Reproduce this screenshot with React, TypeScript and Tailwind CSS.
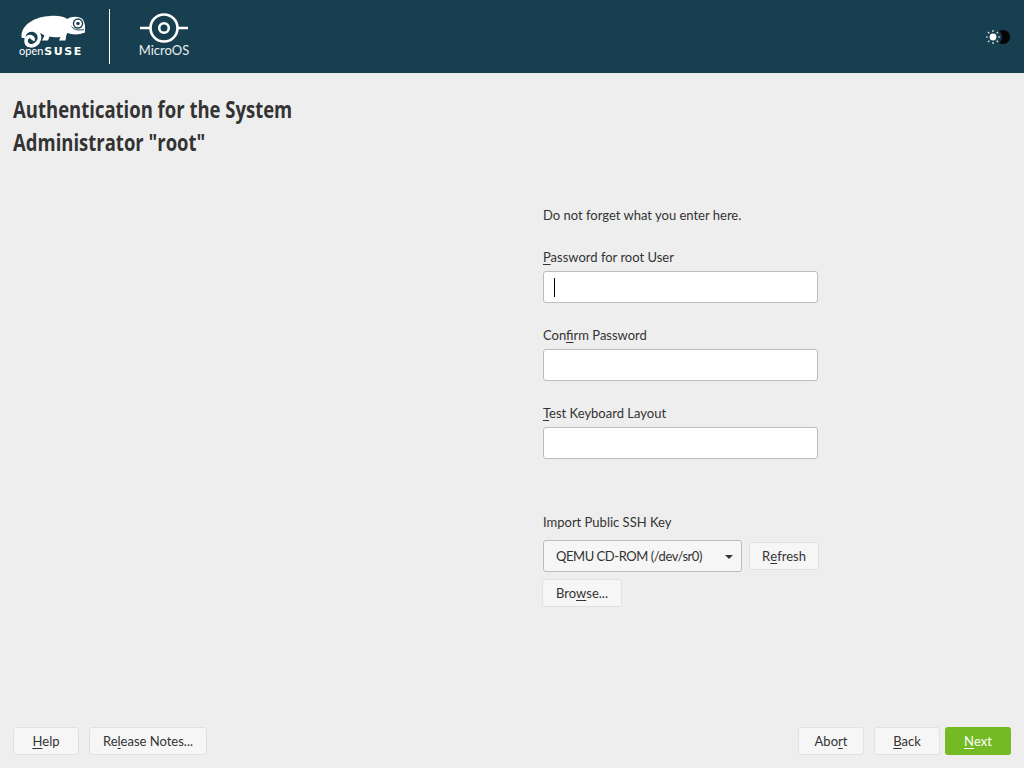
const sans = "font-['Lato','Noto_Sans',sans-serif]";

function Key({ children }: { children: string }) {
  return <span className="underline underline-offset-2">{children}</span>;
}

function Chameleon() {
  return (
    <svg width="70" height="36" viewBox="15 12 70 36" className="block">
      <path
        fill="#fff"
        d="M21.5 37C21 24 36 16.5 50 16C57 15.5 63 16 67.5 19C71 16 79 16 82.5 19C85 22 85.5 28 85 32.5C79 35 72 35 67.5 33C66 35 66 37 65.5 40.5L59 40.5L60.5 37C56 37.5 52 37 49.5 36.5L48 40.5L42 40.5L44.5 35.5C41 33.5 38.5 31.5 36 30.5C31 29 25 31 21.5 37Z"
      />
      <path
        fill="none"
        stroke="#fff"
        strokeWidth="3.6"
        d="M23.4 38C23.6 32 29 29.5 33 30C38 31 40.2 35 39.2 39.5C38 44 33.5 46.6 29.5 45.6C25.5 44.5 25 39 28 37C31 35.5 34 38 32.8 40.5"
      />
      <circle cx="78" cy="23.5" r="5.2" fill="#183f50" />
      <circle cx="78" cy="23.5" r="3.8" fill="#fff" />
      <circle cx="78" cy="23.5" r="1.7" fill="#183f50" />
      <path fill="none" stroke="#183f50" strokeWidth="1" d="M71.5 26.5C75 30.5 79 30.5 84 29.5" />
    </svg>
  );
}

function MicroOsIcon() {
  return (
    <svg width="50" height="32" viewBox="0 0 50 32" className="block">
      <circle cx="25" cy="16" r="13.5" fill="none" stroke="#fff" strokeWidth="2.6" />
      <circle cx="25" cy="16" r="4.8" fill="none" stroke="#fff" strokeWidth="2.6" />
      <path d="M1 16H11M39 16H49" stroke="#fff" strokeWidth="2.6" />
    </svg>
  );
}

function ThemeToggle() {
  return (
    <svg width="26" height="18" viewBox="0 0 26 18" className="block">
      <path fill="#050505" d="M14 3.3A7 7 0 1 1 14 14.7A7 7 0 0 0 14 3.3Z" />
      <circle cx="8" cy="9" r="3.4" fill="#fff" />
      <path
        stroke="#dfe8ec"
        strokeWidth="1.2"
        d="M8 2V4M8 14V16M1 9H3M13 9H15M3 4L4.4 5.4M11.6 12.6L13 14M3 14L4.4 12.6M11.6 5.4L13 4"
      />
    </svg>
  );
}

function Button({ children, className = "" }: { children: React.ReactNode; className?: string }) {
  return (
    <button
      type="button"
      className={`flex h-[28px] items-center justify-center rounded-[3px] border border-[#e1e1e1] bg-[#f6f6f6] pt-px text-[13px] text-[#333] ${className}`}
    >
      {children}
    </button>
  );
}

function Field({ label, caret = false }: { label: React.ReactNode; caret?: boolean }) {
  return (
    <div className="flex flex-col">
      <label className="h-[20px] text-[13px] leading-[20px] text-[#333]">{label}</label>
      <div className="mt-[4px] flex h-[32px] w-[275px] items-center rounded-[3px] border border-[#bcbcbc] bg-white pl-[10px]">
        {caret && <span className="h-[19px] w-px bg-black" />}
      </div>
    </div>
  );
}

export default function App() {
  return (
    <div className={`flex h-[768px] w-[1024px] flex-col overflow-hidden bg-[#eeeeee] ${sans}`}>
      <header className="flex h-[73px] shrink-0 items-center bg-[#183f50] pl-[15px] pr-[13px]">
        <div className="mb-[4px] flex w-[73px] flex-col items-start">
          <Chameleon />
          <div className="-mt-[2px] ml-[4px] whitespace-nowrap text-[11px] leading-[10px] text-white">
            open<span className="ml-px font-['DejaVu_Sans'] text-[11px] font-bold tracking-[1.5px]">SUSE</span>
          </div>
        </div>
        <div className="ml-[21px] h-[55px] w-px bg-white" />
        <div className="ml-[22px] mb-[4px] flex w-[64px] flex-col items-center">
          <MicroOsIcon />
          <div className="-mt-[2px] text-[13px] leading-[16px] text-[#e8eef0]">MicroOS</div>
        </div>
        <div className="ml-auto">
          <ThemeToggle />
        </div>
      </header>

      <main className="flex min-h-0 flex-1 flex-col">
        <h1 className="origin-left scale-x-[0.77] whitespace-nowrap pl-[17px] pt-[19px] font-['Open_Sans'] text-[24px] font-bold leading-[33px] text-[#333]">
          Authentication for the System
          <br />
          Administrator "root"
        </h1>

        <section className="ml-[543px] mt-[47px] flex w-[280px] flex-col">
          <p className="h-[20px] text-[13px] leading-[20px] text-[#333]">Do not forget what you enter here.</p>
          <div className="mt-[22px] flex flex-col gap-[22px]">
            <Field caret label={<><Key>P</Key>assword for root User</>} />
            <Field label={<>Con<Key>f</Key>irm Password</>} />
            <Field label={<><Key>T</Key>est Keyboard Layout</>} />
          </div>

          <div className="mt-[53px] h-[20px] text-[13px] leading-[20px] text-[#333]">Import Public SSH Key</div>
          <div className="mt-[8px] flex items-center gap-[7px]">
            <div className="flex h-[32px] w-[199px] items-center justify-between rounded-[3px] border border-[#bcbcbc] bg-[#f6f6f6] pl-[12px] pr-[8px] pt-px text-[13px] tracking-[-0.45px] text-[#333]">
              <span>QEMU CD-ROM (/dev/sr0)</span>
              <span className="h-0 w-0 border-x-[4px] border-t-[4px] border-x-transparent border-t-[#333]" />
            </div>
            <Button className="w-[70px]">R<Key>e</Key>fresh</Button>
          </div>
          <Button className="-ml-px mt-[7px] w-[80px]">Bro<Key>w</Key>se...</Button>
        </section>
      </main>

      <footer className="flex h-[41px] shrink-0 items-start px-[13px]">
        <Button className="w-[66px]"><Key>H</Key>elp</Button>
        <Button className="ml-[10px] w-[118px]">Re<Key>l</Key>ease Notes...</Button>
        <Button className="ml-auto w-[66px]">Abo<Key>r</Key>t</Button>
        <Button className="ml-[10px] w-[66px]"><Key>B</Key>ack</Button>
        <button
          type="button"
          className="ml-[5px] flex h-[28px] w-[66px] items-center justify-center rounded-[3px] bg-[#73ba25] pt-px text-[13px] text-white"
        >
          <Key>N</Key>ext
        </button>
      </footer>
    </div>
  );
}
